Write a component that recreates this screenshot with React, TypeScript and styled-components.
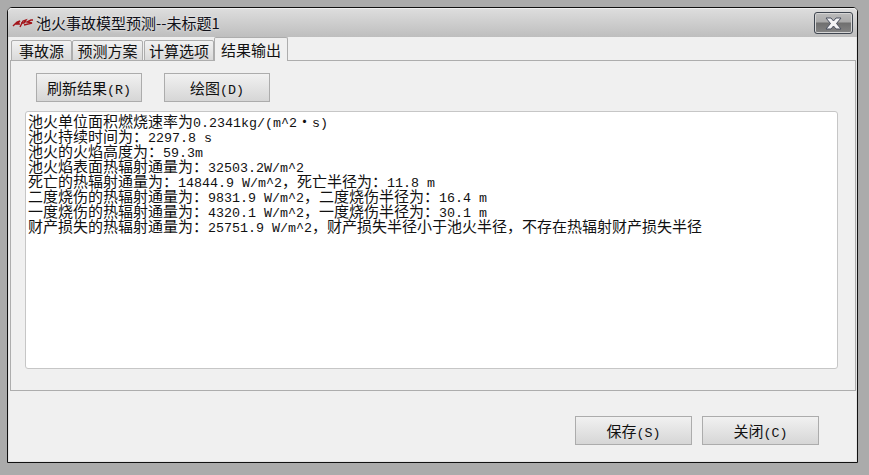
import styled, { createGlobalStyle } from 'styled-components'

const GlobalStyle = createGlobalStyle`
  html, body {
    margin: 0;
    padding: 0;
    width: 869px;
    height: 475px;
    overflow: hidden;
    background: #ababab;
  }
`

const Page = styled.div`
  box-sizing: border-box;
  width: 869px;
  height: 475px;
  padding: 7px 0 0 7px;
  font-family: 'Noto Sans CJK SC', 'Liberation Sans', sans-serif;
  color: #111;
`

const Window = styled.div`
  box-sizing: border-box;
  width: 851px;
  height: 456px;
  display: flex;
  flex-direction: column;
  background: #f0f0f0;
  border: 1px solid #111;
  border-radius: 5px 5px 0 0;
  box-shadow: inset 0 0 0 1px #e4e4e4;
`

const TitleBar = styled.div`
  height: 29px;
  display: flex;
  align-items: center;
  padding: 0 4px 0 4px;
  border-radius: 4px 4px 0 0;
  background: linear-gradient(#dedede, #bebebe);
  box-shadow: inset 0 1px 0 #f0f0f0;
`

const TitleText = styled.span`
  margin-left: 2px;
  font-size: 15px;
  line-height: 20px;
  color: #101018;
  text-shadow: 0 0 3px #f2f2f2;
  flex: 1;
`

const CloseButton = styled.div`
  box-sizing: border-box;
  width: 39px;
  height: 22px;
  margin-top: 1px;
  display: flex;
  align-items: center;
  justify-content: center;
  border: 1px solid #3f4650;
  border-radius: 3px;
  background: linear-gradient(#bcbcbc 0%, #aaaaaa 45%, #6f6f6f 50%, #848484 100%);
  box-shadow: inset 0 0 0 1px #d5d5d5;
`

const TabStrip = styled.div`
  height: 23px;
  display: flex;
  align-items: flex-end;
  padding-left: 3px;
  position: relative;
  z-index: 1;
`

const Tab = styled.div<{ $width: number; $active?: boolean; $gap?: number }>`
  box-sizing: border-box;
  width: ${(p) => p.$width}px;
  height: ${(p) => (p.$active ? 24 : 21)}px;
  margin-left: ${(p) => p.$gap ?? 0}px;
  margin-bottom: -1px;
  display: flex;
  align-items: center;
  justify-content: center;
  font-size: 15px;
  color: #111;
  border: 1px solid #adadad;
  border-bottom: ${(p) => (p.$active ? 'none' : '1px solid #adadad')};
  border-radius: 2px 2px 0 0;
  background: ${(p) =>
    p.$active ? '#f0f0f0' : 'linear-gradient(#f2f2f2, #d9d9d9)'};
`

const Pane = styled.div`
  box-sizing: border-box;
  width: 846px;
  height: 331px;
  margin-left: 2px;
  padding: 12px 17px 21px 14px;
  display: flex;
  flex-direction: column;
  border: 1px solid #adadad;
  background: #f0f0f0;
`

const Toolbar = styled.div`
  display: flex;
  gap: 22px;
  padding-left: 11px;
  margin-bottom: 9px;
`

const Button = styled.div<{ $width: number }>`
  box-sizing: border-box;
  width: ${(p) => p.$width}px;
  height: 29px;
  display: flex;
  align-items: center;
  justify-content: center;
  font-size: 15px;
  color: #111;
  border: 1px solid #acacac;
  background: linear-gradient(#f1f1f1, #d6d6d6);
`

const Latin = styled.span`
  font-family: 'Liberation Mono', monospace;
  font-size: 13.33px;
`

const Output = styled.div`
  flex: 1;
  box-sizing: border-box;
  padding: 1px 2px;
  background: #fff;
  border: 1px solid #c6c6c6;
  border-radius: 3px;
  font-size: 15px;
  line-height: 15px;
  color: #111;
`

const Line = styled.div`
  height: 15px;
  white-space: pre;
`

const Footer = styled.div`
  flex: 1;
  display: flex;
  justify-content: flex-end;
  align-items: flex-start;
  gap: 10px;
  padding: 25px 38px 0 0;
`

const LINES = [
  '池火单位面积燃烧速率为0.2341kg/(m^2・s)',
  '池火持续时间为：2297.8 s',
  '池火的火焰高度为：59.3m',
  '池火焰表面热辐射通量为：32503.2W/m^2',
  '死亡的热辐射通量为：14844.9 W/m^2，死亡半径为：11.8 m',
  '二度烧伤的热辐射通量为：9831.9 W/m^2，二度烧伤半径为：16.4 m',
  '一度烧伤的热辐射通量为：4320.1 W/m^2，一度烧伤半径为：30.1 m',
  '财产损失的热辐射通量为：25751.9 W/m^2，财产损失半径小于池火半径，不存在热辐射财产损失半径',
]

// ascii in the old dialog font is half the width of a hanzi
const mixed = (text: string) =>
  text
    .split(/([\x20-\x7e]+)/)
    .map((part, i) => (i % 2 ? <Latin key={i}>{part}</Latin> : part))

const Logo = () => (
  <svg width="22" height="10" viewBox="0 0 22 10" fill="none">
    <path
      d="M1 8 L5 4 L8 3 L5 6 M3 6 H8 M8 9 L11 3 L14 2 L12 5 H9 M12 7 L16 6 L20 5 L15 4 L19 2 L21 2"
      stroke="#a3141a"
      strokeWidth="1.4"
    />
  </svg>
)

const CloseIcon = () => (
  <svg width="19" height="13" viewBox="0 0 19 13">
    <path
      d="M2 1 H7 L9.5 4 L12 1 H17 L12.5 6.5 L17 12 H12 L9.5 9 L7 12 H2 L6.5 6.5 Z"
      fill="#f4f4f6"
      stroke="#4a5060"
      strokeWidth="1"
    />
  </svg>
)

export default function App() {
  return (
    <Page lang="zh-CN">
      <GlobalStyle />
      <Window>
        <TitleBar>
          <Logo />
          <TitleText>池火事故模型预测--未标题1</TitleText>
          <CloseButton>
            <CloseIcon />
          </CloseButton>
        </TitleBar>
        <TabStrip>
          <Tab $width={61}>事故源</Tab>
          <Tab $width={71}>预测方案</Tab>
          <Tab $width={70} $gap={1}>计算选项</Tab>
          <Tab $width={74} $active>结果输出</Tab>
        </TabStrip>
        <Pane>
          <Toolbar>
            <Button $width={106}><span>{mixed('刷新结果(R)')}</span></Button>
            <Button $width={106}><span>{mixed('绘图(D)')}</span></Button>
          </Toolbar>
          <Output>
            {LINES.map((line) => (
              <Line key={line}>{mixed(line)}</Line>
            ))}
          </Output>
        </Pane>
        <Footer>
          <Button $width={117}><span>{mixed('保存(S)')}</span></Button>
          <Button $width={117}><span>{mixed('关闭(C)')}</span></Button>
        </Footer>
      </Window>
    </Page>
  )
}
